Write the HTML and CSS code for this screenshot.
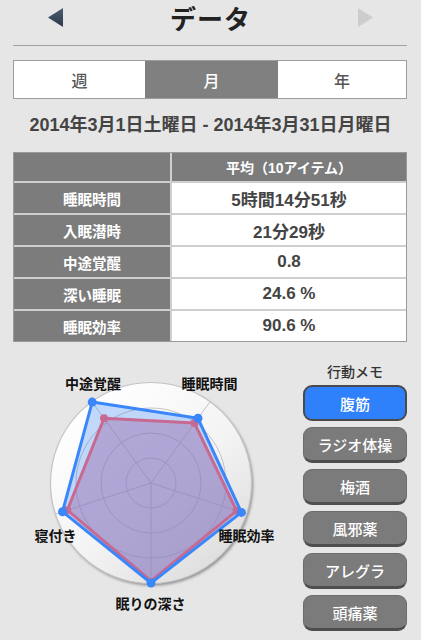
FILE: index.html
```html
<!DOCTYPE html>
<html lang="ja">
<head>
<meta charset="utf-8">
<title>データ</title>
<link rel="stylesheet" href="styles.css">
</head>
<body>
<div class="screen">
  <header class="topbar">
    <svg class="arrow" width="15" height="19" viewBox="0 0 15 19">
      <defs>
        <linearGradient id="ag" x1="0" y1="0" x2="0" y2="1">
          <stop offset="0" stop-color="#4a5d70"/>
          <stop offset="1" stop-color="#2c3a48"/>
        </linearGradient>
      </defs>
      <polygon points="15,0 15,19 0,9.5" fill="url(#ag)"/>
    </svg>
    <h1 class="title">データ</h1>
    <svg class="arrow" width="15" height="19" viewBox="0 0 15 19">
      <polygon points="0,0 0,19 15,9.5" fill="#cdcdcd"/>
    </svg>
  </header>

  <div class="segmented">
    <div class="seg">週</div>
    <div class="seg seg-on">月</div>
    <div class="seg">年</div>
  </div>

  <p class="range">2014年3月1日土曜日 - 2014年3月31日月曜日</p>

  <div class="stats">
    <div class="cell head"></div>
    <div class="cell head headval">平均（10アイテム）</div>
    <div class="cell key">睡眠時間</div>
    <div class="cell val">5時間14分51秒</div>
    <div class="cell key">入眠潜時</div>
    <div class="cell val">21分29秒</div>
    <div class="cell key">中途覚醒</div>
    <div class="cell val">0.8</div>
    <div class="cell key">深い睡眠</div>
    <div class="cell val">24.6 %</div>
    <div class="cell key">睡眠効率</div>
    <div class="cell val">90.6 %</div>
  </div>

  <section class="lower">
    <svg class="radar" width="290" height="285" viewBox="0 355 290 285">
      <defs>
        <linearGradient id="disc" x1="0.15" y1="0.1" x2="0.85" y2="0.95">
          <stop offset="0" stop-color="#ffffff"/>
          <stop offset="0.55" stop-color="#f3f3f3"/>
          <stop offset="1" stop-color="#dcdcdc"/>
        </linearGradient>
        <filter id="blur" x="-20%" y="-20%" width="140%" height="140%">
          <feGaussianBlur stdDeviation="1.8"/>
        </filter>
      </defs>
      <circle cx="152.5" cy="485" r="100.5" fill="#8a8a8a" filter="url(#blur)"/>
      <circle cx="151" cy="483" r="100.5" fill="url(#disc)" stroke="#c4c4c4" stroke-width="1.2"/>
      <g fill="none" stroke="#c3c3c3" stroke-width="1">
        <circle cx="151" cy="483" r="25"/>
        <circle cx="151" cy="483" r="50"/>
        <circle cx="151" cy="483" r="75"/>
        <line x1="151" y1="483" x2="92.2" y2="402.1"/>
        <line x1="151" y1="483" x2="209.8" y2="402.1"/>
        <line x1="151" y1="483" x2="246.1" y2="513.9"/>
        <line x1="151" y1="483" x2="151" y2="583"/>
        <line x1="151" y1="483" x2="55.9" y2="513.9"/>
      </g>
      <polygon points="92.2,402.1 198,418.3 241.4,512.4 151,583 62.5,511.7" fill="rgba(70,140,250,0.32)"/>
      <polygon points="104,418.3 194.5,423.1 236.6,510.8 151,581 67.3,510.2" fill="rgba(160,110,170,0.45)" stroke="#c76990" stroke-width="3" stroke-linejoin="round"/>
      <g fill="#c76990">
        <circle cx="104" cy="418.3" r="4"/>
        <circle cx="194.5" cy="423.1" r="4"/>
        <circle cx="236.6" cy="510.8" r="4"/>
        <circle cx="67.3" cy="510.2" r="4"/>
      </g>
      <polygon points="92.2,402.1 198,418.3 241.4,512.4 151,583 62.5,511.7" fill="none" stroke="#3a86fb" stroke-width="3" stroke-linejoin="round"/>
      <g fill="#3a86fb">
        <circle cx="92.2" cy="402.1" r="4.5"/>
        <circle cx="198" cy="418.3" r="4.5"/>
        <circle cx="241.4" cy="512.4" r="4.5"/>
        <circle cx="151" cy="583" r="4.5"/>
        <circle cx="62.5" cy="511.7" r="4.5"/>
      </g>
      <g class="axis-label" text-anchor="middle">
        <text x="93" y="389">中途覚醒</text>
        <text x="209.5" y="389">睡眠時間</text>
        <text x="246.5" y="541">睡眠効率</text>
        <text x="55.5" y="541">寝付き</text>
        <text x="150.5" y="608.5">眠りの深さ</text>
      </g>
    </svg>

    <aside class="memo">
      <div class="memo-title">行動メモ</div>
      <div class="memo-btn memo-on">腹筋</div>
      <div class="memo-btn">ラジオ体操</div>
      <div class="memo-btn">梅酒</div>
      <div class="memo-btn">風邪薬</div>
      <div class="memo-btn">アレグラ</div>
      <div class="memo-btn">頭痛薬</div>
    </aside>
  </section>
</div>
</body>
</html>
```

FILE: styles.css
```css
* { box-sizing: border-box; }

html, body {
  margin: 0;
  padding: 0;
  background: #e6e6e6;
}

body {
  font-family: "Liberation Sans", "Noto Sans CJK JP", sans-serif;
  color: #333;
  width: 421px;
  height: 640px;
  overflow: hidden;
}

.screen {
  width: 421px;
}

.topbar {
  margin: 0 14px 0 13px;
  height: 46px;
  border-bottom: 1px solid #a3a3a3;
  display: flex;
  align-items: center;
  justify-content: space-between;
  padding: 0 34px 10px 35px;
}

.arrow { display: block; }

.title {
  margin: 0;
  font-size: 26px;
  line-height: 30px;
  font-weight: bold;
  color: #222;
  font-family: "Noto Sans CJK JP", sans-serif;
  letter-spacing: 1px;
}

.segmented {
  margin: 14px 14px 0 13px;
  height: 39px;
  border: 1.5px solid #9c9c9c;
  display: grid;
  grid-template-columns: 131px 133px 1fr;
  background: #fff;
}

.seg {
  display: flex;
  align-items: center;
  justify-content: center;
  font-family: "Noto Sans CJK JP", sans-serif;
  font-size: 16px;
  font-weight: 500;
  color: #555;
}

.seg-on {
  background: #808080;
  color: #fff;
}

.range {
  margin: 14px 0 0;
  text-align: center;
  font-size: 18px;
  line-height: 24px;
  font-weight: bold;
  color: #444;
  white-space: nowrap;
}

.stats {
  margin: 15px 14px 0 13px;
  border: 1px solid #9a9a9a;
  background: #cfcfcf;
  display: grid;
  grid-template-columns: 156px 1fr;
  grid-template-rows: 28px repeat(5, 30px);
  gap: 2px;
}

.cell {
  display: flex;
  align-items: center;
  justify-content: center;
  font-weight: bold;
}

.head { background: #7c7c7c; }

.headval {
  color: #fff;
  font-size: 14px;
}

.key {
  background: #7c7c7c;
  color: #fff;
  font-size: 14.5px;
  font-family: "Noto Sans CJK JP", sans-serif;
  font-weight: bold;
}

.val {
  background: #fff;
  color: #444;
  font-size: 17px;
}

.lower {
  margin-top: 13px;
  display: flex;
  align-items: flex-start;
}

.radar {
  display: block;
  flex: none;
}

.axis-label {
  font-family: "Noto Sans CJK JP", sans-serif;
  font-size: 14px;
  font-weight: bold;
  fill: #111;
}

.memo {
  margin-left: 13px;
  width: 104px;
  display: flex;
  flex-direction: column;
  gap: 6px;
}

.memo-title {
  padding-top: 6px;
  height: 26px;
  line-height: 20px;
  text-align: center;
  font-family: "Noto Sans CJK JP", sans-serif;
  font-size: 14px;
  font-weight: 500;
  color: #333;
  margin-bottom: -2px;
}

.memo-btn {
  height: 36px;
  border-radius: 9px;
  background: #7b7b7b;
  border: 1px solid #6c6c6c;
  border-bottom: 3px solid #4e4e4e;
  display: flex;
  align-items: center;
  justify-content: center;
  color: #fff;
  font-family: "Noto Sans CJK JP", sans-serif;
  font-size: 15px;
  font-weight: 500;
}

.memo-on {
  background: #2f80fb;
  border: 2px solid #4a4a4a;
}
```
